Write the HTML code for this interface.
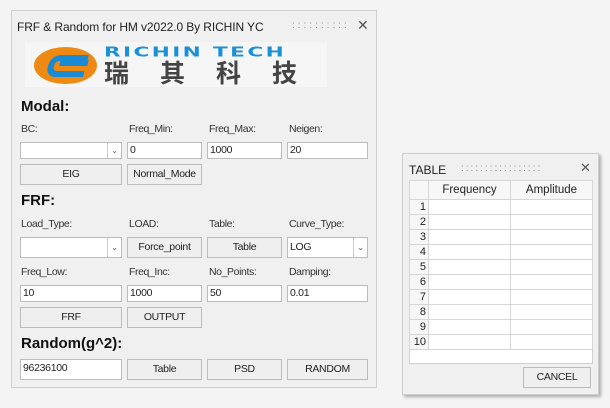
<!DOCTYPE html>
<html><head><meta charset="utf-8"><style>
body{margin:0;width:610px;height:408px;background:#f4f4f4;font-family:"Liberation Sans",sans-serif;font-size:10.5px;color:#222;position:relative;overflow:hidden}
.a{position:absolute}
.box{position:absolute;background:#fff;border:1px solid #bcbcbc;box-sizing:border-box;height:17px;line-height:15px;padding-left:2px;font-size:10.5px;letter-spacing:-0.3px}
.btn{position:absolute;background:#efefef;border:1px solid #bcbcbc;box-sizing:border-box;height:21px;line-height:19px;text-align:center;font-size:10.5px;letter-spacing:-0.3px}
.h{position:absolute;font-weight:bold;font-size:15px;color:#111}
.l{position:absolute;font-size:10.5px;color:#333;letter-spacing:-0.4px}
.dd{position:absolute;right:0;top:0;width:13px;height:100%;border-left:1px solid #ccc;text-align:center;font-size:8px;line-height:19px;color:#555}
table{border-collapse:collapse}
td{border:1px solid #d6d6d6;height:14px;padding:0;font-size:11px}
</style></head><body>
<div class="a" style="left:11px;top:10px;width:366px;height:378px;border:1px solid #cfcfcf;background:#f0f0f0;box-sizing:border-box"></div>
<div class="a" style="left:17px;top:20px;font-size:12px;color:#222;letter-spacing:-0.1px">FRF &amp; Random for HM v2022.0 By RICHIN YC</div>
<div class="a" style="left:292px;top:20px;font-size:10px;color:#888;letter-spacing:3px">::::::::::</div>
<div class="a" style="left:357px;top:17px;font-size:14px;color:#555">✕</div>
<!-- logo -->
<div class="a" style="left:25px;top:42px;width:302px;height:45px;background:#f6f6f6"></div>
<div class="a" style="left:34px;top:47px;width:63px;height:37px;border-radius:50%;background:#ee8a14"></div>
<div class="a" style="left:48px;top:55px;width:38px;height:22px;border:6px solid #1b8ad4;border-right:none;border-radius:10px 0 0 10px;box-sizing:border-box;transform:skewX(-15deg)"></div>
<div class="a" style="left:60px;top:60px;width:28px;height:6px;background:#1b8ad4;transform:skewX(-15deg)"></div>
<div class="a" style="left:104px;top:42px;font-size:18px;font-weight:900;color:#1b8fd8;letter-spacing:2px;transform:scale(1.2,0.75);transform-origin:left center;font-family:'DejaVu Sans',sans-serif">RICHIN TECH</div>
<div class="a" style="left:104px;top:58px;font-size:25px;font-weight:bold;color:#444;letter-spacing:31px;font-family:'Noto Sans CJK SC',sans-serif;line-height:28px">瑞其科技</div>

<div class="h" style="left:21px;top:98px">Modal:</div>
<div class="l" style="left:21px;top:123px">BC:</div>
<div class="l" style="left:129px;top:123px">Freq_Min:</div>
<div class="l" style="left:209px;top:123px">Freq_Max:</div>
<div class="l" style="left:289px;top:123px">Neigen:</div>
<div class="box" style="left:20px;top:142px;width:102px"><div class="dd" style="line-height:15px">⌄</div></div>
<div class="box" style="left:127px;top:142px;width:75px">0</div>
<div class="box" style="left:207px;top:142px;width:75px">1000</div>
<div class="box" style="left:287px;top:142px;width:81px">20</div>
<div class="btn" style="left:20px;top:164px;width:102px">EIG</div>
<div class="btn" style="left:127px;top:164px;width:75px">Normal_Mode</div>

<div class="h" style="left:21px;top:192px">FRF:</div>
<div class="l" style="left:21px;top:218px">Load_Type:</div>
<div class="l" style="left:129px;top:218px">LOAD:</div>
<div class="l" style="left:209px;top:218px">Table:</div>
<div class="l" style="left:289px;top:218px">Curve_Type:</div>
<div class="box" style="left:20px;top:237px;width:102px;height:21px"><div class="dd">⌄</div></div>
<div class="btn" style="left:127px;top:237px;width:75px">Force_point</div>
<div class="btn" style="left:207px;top:237px;width:75px">Table</div>
<div class="box" style="left:287px;top:237px;width:81px;height:21px;line-height:19px">LOG<div class="dd">⌄</div></div>
<div class="l" style="left:21px;top:266px">Freq_Low:</div>
<div class="l" style="left:129px;top:266px">Freq_Inc:</div>
<div class="l" style="left:209px;top:266px">No_Points:</div>
<div class="l" style="left:289px;top:266px">Damping:</div>
<div class="box" style="left:20px;top:285px;width:102px">10</div>
<div class="box" style="left:127px;top:285px;width:75px">1000</div>
<div class="box" style="left:207px;top:285px;width:75px">50</div>
<div class="box" style="left:287px;top:285px;width:81px">0.01</div>
<div class="btn" style="left:20px;top:307px;width:102px">FRF</div>
<div class="btn" style="left:127px;top:307px;width:75px">OUTPUT</div>

<div class="h" style="left:21px;top:335px">Random(g^2):</div>
<div class="box" style="left:20px;top:359px;width:102px;height:21px;line-height:17px">96236100</div>
<div class="btn" style="left:127px;top:359px;width:75px">Table</div>
<div class="btn" style="left:207px;top:359px;width:75px">PSD</div>
<div class="btn" style="left:287px;top:359px;width:81px">RANDOM</div>

<!-- TABLE window -->
<div class="a" style="left:402px;top:153px;width:197px;height:242px;background:#f0f0f0;border:1px solid #cfcfcf;box-sizing:border-box;box-shadow:2px 2px 3px rgba(0,0,0,0.3)"></div>
<div class="a" style="left:409px;top:163px;font-size:12px;color:#222">TABLE</div>
<div class="a" style="left:461px;top:163px;font-size:10px;color:#888;letter-spacing:2px">:::::::::::::::::</div>
<div class="a" style="left:580px;top:160px;font-size:13px;color:#555">✕</div>
<div class="a" style="left:409px;top:180px;width:184px;height:184px;background:#fff;border:1px solid #d0d0d0;box-sizing:border-box"></div>
<table class="a" style="left:409px;top:180px;width:184px">
<tr style="background:#f7f7f7"><td style="width:18px;height:18px"></td><td style="width:81px;text-align:center;font-size:11.5px">Frequency</td><td style="text-align:center;font-size:11.5px">Amplitude</td></tr>
<tr><td style="text-align:right;padding-right:2px;background:#f7f7f7">1</td><td></td><td></td></tr>
<tr><td style="text-align:right;padding-right:2px;background:#f7f7f7">2</td><td></td><td></td></tr>
<tr><td style="text-align:right;padding-right:2px;background:#f7f7f7">3</td><td></td><td></td></tr>
<tr><td style="text-align:right;padding-right:2px;background:#f7f7f7">4</td><td></td><td></td></tr>
<tr><td style="text-align:right;padding-right:2px;background:#f7f7f7">5</td><td></td><td></td></tr>
<tr><td style="text-align:right;padding-right:2px;background:#f7f7f7">6</td><td></td><td></td></tr>
<tr><td style="text-align:right;padding-right:2px;background:#f7f7f7">7</td><td></td><td></td></tr>
<tr><td style="text-align:right;padding-right:2px;background:#f7f7f7">8</td><td></td><td></td></tr>
<tr><td style="text-align:right;padding-right:2px;background:#f7f7f7">9</td><td></td><td></td></tr>
<tr><td style="text-align:right;padding-right:2px;background:#f7f7f7">10</td><td></td><td></td></tr>
</table>
<div class="btn" style="left:523px;top:367px;width:68px">CANCEL</div>
</body></html>
